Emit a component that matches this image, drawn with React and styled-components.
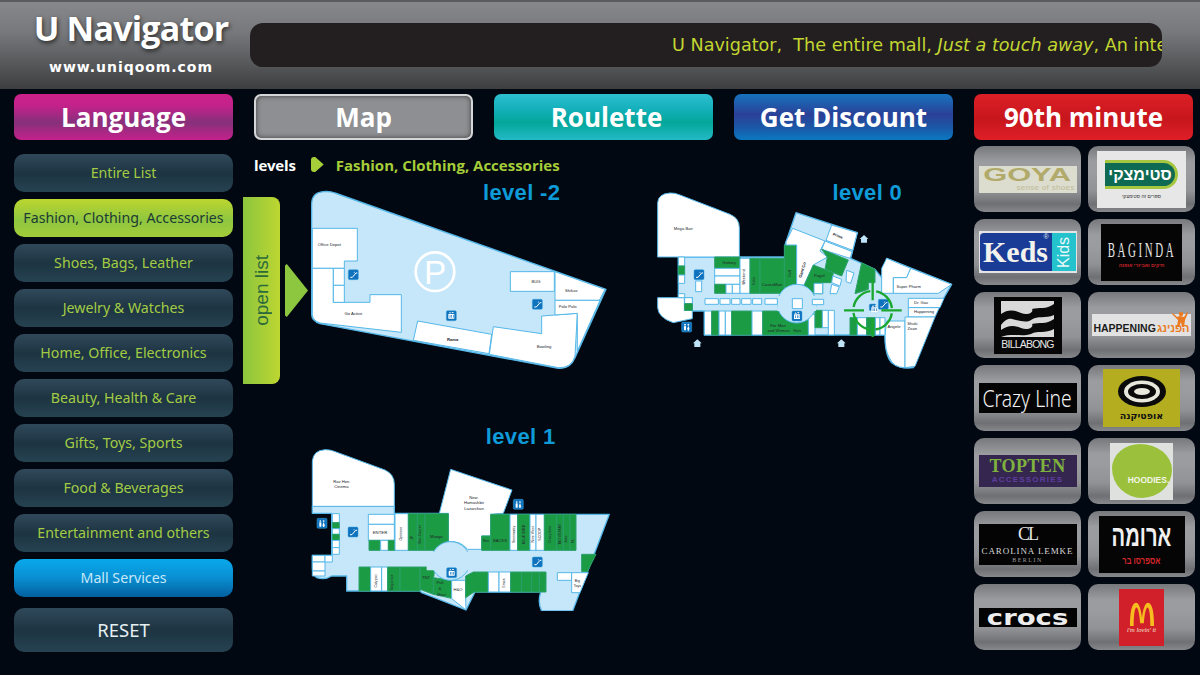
import React from 'react';
import styled, { createGlobalStyle } from 'styled-components';

const GlobalStyle = createGlobalStyle`
  html, body {
    margin: 0;
    padding: 0;
    background: #010812;
    overflow: hidden;
  }
  * { box-sizing: border-box; }
`;

const Page = styled.div`
  width: 1200px;
  height: 675px;
  overflow: hidden;
  background: #010812;
  font-family: 'Open Sans', 'Liberation Sans', sans-serif;
`;

const Header = styled.header`
  display: flex;
  align-items: center;
  height: 89px;
  padding-right: 38px;
  border-top: 2px solid #5a5b5e;
  background: linear-gradient(180deg, #87888b 0%, #77787b 35%, #3d3e40 100%);
`;

const Brand = styled.div`
  align-self: flex-start;
  width: 250px;
  flex: none;
  padding: 3px 0 0 12px;
  text-align: center;
`;

const BrandName = styled.div`
  color: #fff;
  font-size: 34px;
  line-height: 46px;
  font-weight: 700;
  letter-spacing: -0.8px;
  text-shadow: 1px 2px 4px rgba(0, 0, 0, 0.65);
`;

const BrandUrl = styled.div`
  margin-top: 7px;
  color: #fff;
  font-family: 'DejaVu Sans', sans-serif;
  font-size: 14px;
  line-height: 18px;
  font-weight: 700;
  letter-spacing: 0.95px;
`;

const Ticker = styled.div`
  flex: 1;
  height: 44px;
  margin-top: -2px;
  padding-left: 422px;
  border-radius: 13px;
  background: #231f20;
  overflow: hidden;
  white-space: pre;
  color: #c3d731;
  font-family: 'DejaVu Sans', sans-serif;
  font-size: 17.6px;
  line-height: 44px;
  em { font-style: italic; }
`;

const TopNav = styled.nav`
  display: grid;
  grid-template-columns: repeat(5, 219px);
  column-gap: 21px;
  margin: 5px 0 0 14px;
`;

const palettes = {
  magenta: 'linear-gradient(180deg, #cb2089 0%, #c4228b 25%, #86307a 62%, #c4218b 100%)',
  teal: 'linear-gradient(180deg, #2dbfd0 0%, #16b1bd 30%, #03a69a 62%, #23bac6 100%)',
  blue: 'linear-gradient(180deg, #1673be 0%, #2b4097 45%, #1c55a4 70%, #0b78c2 100%)',
  red: 'linear-gradient(180deg, #dc1f26 0%, #c7161d 55%, #e01f27 100%)',
  gray: '#8e8f92',
};

const TopButton = styled.button`
  height: 46px;
  padding: 0 0 0 ${(p) => (p.$tone === 'teal' ? 6 : 0)}px;
  border: ${(p) => (p.$tone === 'gray' ? '2px solid #d5d6d8' : 'none')};
  border-radius: 7px;
  background: ${(p) => palettes[p.$tone]};
  box-shadow: ${(p) => (p.$tone === 'gray' ? 'inset 0 0 5px #3c3c3e' : 'none')};
  color: #fff;
  font-family: 'Open Sans', sans-serif;
  font-size: 26px;
  line-height: 42px;
  font-weight: 700;
`;

const Columns = styled.main`
  display: grid;
  grid-template-columns: 219px 741px 221px;
  margin: 6px 0 0 14px;
`;

const Sidebar = styled.aside`
  display: flex;
  flex-direction: column;
  gap: 7px;
  padding-top: 8px;
`;

const sideTones = {
  normal: 'linear-gradient(180deg, #30495a 0%, #1d3442 50%, #264251 100%)',
  active: 'linear-gradient(180deg, #bdd62f 0%, #8fc640 55%, #a3cd39 100%)',
  service: 'linear-gradient(180deg, #08a9ec 0%, #0a8ed2 50%, #03609f 100%)',
};

const sideText = { normal: '#a3cc45', active: '#1d3b33', service: '#c5e8f9' };

const SideButton = styled.button`
  height: 38px;
  padding: 0 0 1px;
  border: none;
  border-radius: 10px;
  background: ${(p) => sideTones[p.$tone]};
  color: ${(p) => sideText[p.$tone]};
  font-family: 'Noto Sans', sans-serif;
  font-size: 14.2px;
  line-height: 37px;
  white-space: nowrap;
`;

const ResetButton = styled(SideButton)`
  height: 44px;
  margin-top: 4px;
  color: #e6eff2;
  font-size: 18.5px;
`;

const Center = styled.section`
  padding: 9px 0 0 10px;
`;

const Crumbs = styled.div`
  display: flex;
  align-items: center;
  height: 19px;
  padding-left: 11px;
  font-size: 15px;
  font-weight: 700;
`;

const CrumbLevel = styled.span`
  color: #fff;
  letter-spacing: -0.2px;
`;

const CrumbArrow = styled.span`
  width: 13px;
  height: 15px;
  margin: 0 12px 0 15px;
  border-radius: 3px;
  background: #a6ce39;
  clip-path: polygon(0 0, 35% 0, 100% 50%, 35% 100%, 0 100%);
`;

const CrumbTitle = styled.span`
  color: #a6ce39;
`;

const MapArea = styled.div`
  display: flex;
  align-items: flex-start;
  margin-top: 7px;
`;

const OpenList = styled.div`
  display: flex;
  align-items: center;
  justify-content: center;
  width: 37px;
  height: 187px;
  margin-top: 16px;
  border-radius: 0 8px 8px 0;
  background: linear-gradient(90deg, #8cc63f 0%, #bdd630 100%);
`;

const OpenListLabel = styled.span`
  writing-mode: vertical-rl;
  transform: rotate(180deg);
  color: #2c6a3c;
  font-family: 'Liberation Sans', sans-serif;
  font-size: 19px;
  line-height: 24px;
`;

const OpenArrow = styled.div`
  width: 23px;
  height: 53px;
  margin: 83px 0 0 5px;
  background: #8dc63f;
  clip-path: polygon(0 3%, 8% 0, 100% 50%, 8% 100%, 0 97%);
`;

const MapGrid = styled.div`
  display: grid;
  grid-template-columns: 332px 320px;
  grid-template-rows: 220px 190px;
  row-gap: 20px;
`;

const MapSvg = styled.svg`
  display: block;
  font-family: 'Liberation Sans', sans-serif;
`;

const LevelTitle = styled.text`
  fill: #0e9bd8;
  font-size: 66px;
  font-weight: 700;
  letter-spacing: 1px;
  text-anchor: middle;
`;

const Shop = styled.path`
  fill: ${(p) => (p.$kind === 'g' ? '#1c9b45' : p.$kind === 'b' ? '#c6e7f9' : '#fff')};
  stroke: ${(p) => (p.$kind === 'g' ? '#2a9f6a' : '#55b7e8')};
  stroke-width: ${(p) => (p.$kind === 'b' ? 4 : 3)};
  stroke-linejoin: round;
`;

const ShopLabel = styled.text`
  fill: #20242a;
  font-size: ${(p) => p.$size || 12.5}px;
  font-weight: ${(p) => (p.$bold ? 700 : 400)};
  text-anchor: middle;
`;

const r = (x0, y0, x1, y1) => `M${x0} ${y0}H${x1}V${y1}H${x0}Z`;

const MapIcon = ({ x, y, kind, size = 30 }) => {
  if (kind === 'home') {
    return <path d={`M${x} ${y - 12}L${x + 13} ${y}H${x + 9}V${y + 11}H${x - 9}V${y}H${x - 13}Z`} fill="#bfe4f7" />;
  }
  const h = size / 2;
  return (
    <g transform={`translate(${x - h} ${y - h})`}>
      <rect width={size} height={size} rx="4" fill="#0f72bd" stroke="#3aa0dd" strokeWidth="1.5" />
      {kind === 'esc' && (
        <g fill="none" stroke="#fff" strokeWidth="3">
          <path d="M6 23L12 23L23 10L27 10" />
          <circle cx="18" cy="8" r="1.5" fill="#fff" stroke="none" />
        </g>
      )}
      {kind === 'lift' && (
        <g fill="#fff">
          <rect x="6" y="10" width="18" height="14" rx="1" />
          <path d="M11 4L15 8H7ZM19 8L23 4H15Z" />
          <rect x="10" y="13" width="2" height="8" fill="#0f72bd" />
          <rect x="15" y="13" width="2" height="8" fill="#0f72bd" />
          <rect x="20" y="13" width="2" height="8" fill="#0f72bd" />
        </g>
      )}
      {kind === 'wc' && (
        <g fill="#fff">
          <circle cx="10" cy="8" r="2.6" />
          <circle cx="20" cy="8" r="2.6" />
          <rect x="7" y="12" width="6" height="13" rx="1.5" />
          <path d="M20 11L24 22H16Z" />
          <rect x="18" y="21" width="4" height="5" />
        </g>
      )}
    </g>
  );
};

const LevelMap = ({ title, titleX, titleY, width, height, viewBox, base, shops, after, labels, icons, children }) => (
  <MapSvg width={width} height={height} viewBox={viewBox}>
    <LevelTitle x={titleX} y={titleY}>{title}</LevelTitle>
    <Shop $kind="b" d={base} />
    {shops.map(([d, kind], i) => <Shop key={i} d={d} $kind={kind} />)}
    {after}
    {labels.map(([x, y, text, rot, opts], i) => (
      <ShopLabel
        key={i}
        x={x}
        y={y}
        $size={opts && opts.size}
        $bold={opts && opts.bold}
        transform={rot ? `rotate(${rot} ${x} ${y})` : undefined}
      >
        {text}
      </ShopLabel>
    ))}
    {icons.map(([x, y, kind, size], i) => <MapIcon key={i} x={x} y={y} kind={kind} size={size} />)}
    {children}
  </MapSvg>
);

const minusTwoShops = [
  ['M217 142H352V240H313V262H217Z'],
  ['M217 262H280V364H390V341H484V454L240 426Q217 418 217 400Z'],
  [r(280, 262, 313, 313)],
  [r(280, 313, 313, 364)],
  ['M533 420L755 460L747 518L520 478Z'],
  ['M760 437L905 458V405L1012 397L1005 525Q995 562 955 560L748 520Z'],
  [r(811, 272, 943, 331)],
  ['M945 272L1095 325L1078 358H945Z'],
  ['M945 358H1080L1012 510V397L945 402Z'],
];

const minusTwoLabels = [
  [268, 196, 'Office Depot'],
  [340, 401, 'Go Active'],
  [638, 479, 'Rama', 0, { bold: true }],
  [888, 305, 'BUG'],
  [994, 333, 'Shikav'],
  [983, 380, 'Polo Polo'],
  [912, 502, 'Bowling'],
];

const zeroShops = [
  ['M53 65Q55 38 90 36Q105 35 120 42L270 100Q298 112 298 140V228H53Z'],
  ['M53 350H133V388H157V413L100 425Q55 410 53 380Z'],
  [r(115, 228, 134, 255)],
  [r(115, 255, 134, 282), 'g'],
  [r(115, 282, 134, 307)],
  [r(115, 338, 134, 350)],
  [r(134, 350, 157, 368)],
  [r(134, 368, 157, 388), 'g'],
  [r(224, 228, 300, 262), 'g'],
  [r(224, 262, 300, 285)],
  [r(224, 285, 300, 310)],
  [r(224, 310, 258, 337), 'g'],
  [r(258, 310, 277, 337)],
  [r(277, 310, 300, 337)],
  [r(300, 232, 330, 337)],
  [r(330, 232, 360, 337), 'g'],
  [r(360, 232, 433, 337), 'g'],
  ['M433 192H470V318L433 330Z', 'g'],
  ['M438 182L458 142L555 180L540 210L562 228L520 252L492 312H470V192H438Z'],
  ['M575 132L652 155L638 208L558 178Z'],
  ['M555 180L637 212L630 232L545 205Z'],
  ['M545 205L625 237L605 285L555 265L562 228Z', 'g'],
  ['M520 252L580 275L575 305H548V338H520L492 315Z', 'g'],
  [r(522, 307, 548, 338)],
  ['M578 285L605 295L600 315L575 305Z'],
  ['M575 310L598 318L590 338H570Z'],
  ['M620 268L642 276L632 307L618 302Z'],
  ['M665 245L705 265V305H685V325L645 338Z', 'g'],
  ['M725 262L740 232L812 262L800 290H760V337H725Z'],
  ['M812 262L935 310L895 337H760V290H800Z'],
  ['M805 352H912L900 380H805Z'],
  ['M805 380H898L885 408H805Z'],
  ['M740 420H795V560Q760 560 748 530Q735 510 735 462Z'],
  ['M795 408H885L825 556L795 560Z'],
  [r(193, 390, 215, 462)],
  [r(215, 390, 237, 462), 'g'],
  [r(237, 390, 256, 462)],
  [r(256, 390, 275, 462)],
  [r(275, 390, 336, 462), 'g'],
  [r(336, 390, 368, 462)],
  [r(368, 390, 505, 462), 'g'],
  [r(505, 400, 525, 462)],
  [r(525, 388, 547, 440), 'g'],
  [r(547, 388, 565, 440)],
  [r(565, 388, 583, 462)],
  [r(630, 410, 652, 462), 'g'],
  [r(652, 410, 680, 462)],
  [r(680, 410, 706, 462), 'g'],
  [r(706, 410, 720, 462)],
  [r(720, 410, 735, 462)],
];

const zeroBoxes = [
  [r(167, 300, 185, 332)],
  [r(195, 353, 235, 370)],
  [r(240, 353, 270, 370)],
  [r(275, 353, 300, 370)],
  [r(305, 353, 333, 370)],
  [r(338, 353, 365, 370)],
  [r(375, 353, 412, 370)],
  [r(457, 353, 487, 383)],
  [r(517, 355, 551, 371)],
];

const zeroLabels = [
  [130, 146, 'Mega Bair'],
  [267, 249, 'Gottary'],
  [315, 288, 'Weekend', -90, { size: 11 }],
  [345, 300, 'Celio', -90, { size: 11 }],
  [396, 314, 'CastroMan'],
  [452, 278, 'Golf', -90, { size: 11 }],
  [491, 268, 'Gant Co', -72, { bold: true }],
  [538, 288, 'Pagel'],
  [592, 168, 'Prime', 20, { bold: true, size: 11 }],
  [806, 322, 'Super Pharm'],
  [843, 369, 'Dr. Gav'],
  [852, 397, 'Happening'],
  [414, 438, 'For Man'],
  [416, 454, 'and Woman'],
  [472, 454, 'Hack', 0, { size: 10 }],
  [762, 440, 'Angele'],
  [817, 432, 'Shuki'],
  [817, 448, 'Zoan'],
];

const zeroIcons = [
  [177, 281, 'esc'],
  [471, 405, 'lift'],
  [730, 370, 'esc'],
  [698, 379, 'lift', 20],
  [140, 438, 'wc'],
  [172, 487, 'home'],
  [604, 487, 'home'],
  [672, 174, 'home'],
];

const oneShops = [
  ['M37 120Q40 88 75 86Q90 86 100 90L255 147Q283 160 283 190V256H37Z'],
  ['M452 145L636 207L610 277L572 280V345H545V385H503Q480 358 445 362V277H418Z'],
  [r(97, 278, 118, 305)],
  [r(97, 305, 118, 323), 'g'],
  [r(97, 323, 118, 340)],
  [r(97, 340, 118, 358), 'g'],
  [r(97, 358, 118, 380)],
  [r(97, 380, 118, 400)],
  [r(37, 403, 75, 423)],
  [r(75, 403, 97, 423)],
  [r(37, 423, 75, 450)],
  [r(37, 450, 75, 465)],
  [r(205, 280, 283, 310)],
  [r(205, 310, 283, 358)],
  [r(207, 358, 240, 388), 'g'],
  [r(242, 358, 265, 388)],
  [r(265, 358, 285, 388), 'g'],
  [r(285, 278, 325, 388)],
  ['M325 278H352V388H325Z', 'g'],
  ['M352 278H375V388H352Z', 'g'],
  ['M375 278H445V360Q420 365 403 388H375Z', 'g'],
  [r(545, 345, 572, 388), 'g'],
  [r(572, 280, 630, 388), 'g'],
  [r(630, 280, 653, 388)],
  [r(653, 280, 690, 388), 'g'],
  [r(690, 280, 708, 388)],
  [r(708, 280, 733, 388)],
  [r(733, 280, 770, 388), 'g'],
  [r(770, 280, 790, 388), 'g'],
  [r(790, 280, 810, 388), 'g'],
  [r(810, 280, 828, 388), 'g'],
  ['M845 400H888L862 452H845Z', 'g'],
  [r(177, 438, 212, 510), 'g'],
  [r(212, 438, 245, 510)],
  [r(245, 438, 263, 510)],
  [r(263, 438, 300, 510), 'g'],
  [r(300, 438, 360, 510), 'g'],
  ['M360 438H400Q405 460 400 470V520L360 505Z', 'g'],
  ['M400 470L455 478V532L400 520Z', 'g'],
  ['M455 478H497V530L498 567L455 533Z'],
  ['M497 465L520 453H565V513H522L497 530Z', 'g'],
  [r(565, 453, 597, 513)],
  [r(597, 453, 632, 513)],
  [r(632, 453, 665, 513), 'g'],
  [r(665, 453, 695, 513), 'g'],
  [r(695, 453, 718, 513), 'g'],
  [r(718, 453, 738, 513), 'g'],
  [r(772, 455, 815, 478)],
  ['M815 455H865L840 515H815Z'],
];

const oneLabels = [
  [124, 186, 'Rav Hen'],
  [124, 202, 'Cinema'],
  [520, 233, 'New'],
  [522, 250, 'Hamashbir'],
  [522, 266, 'Lazarchan'],
  [240, 340, 'ENTER', 0, { size: 13 }],
  [307, 338, 'Optitone', -90, { size: 11 }],
  [340, 350, 'JP', -90, { size: 11 }],
  [362, 340, 'Dor-Carpet', -90, { size: 11 }],
  [409, 351, 'Mango'],
  [558, 364, 'Ren', 0, { size: 10 }],
  [600, 364, 'BACKS'],
  [644, 340, 'Steinmatzy', -90, { size: 10.5 }],
  [675, 340, 'BLUE BIRD', -90, { size: 11 }],
  [702, 340, 'Nine West', -90, { size: 10.5 }],
  [724, 340, 'SCOOP', -90, { size: 10.5 }],
  [754, 340, 'Crazy Line', -90, { size: 11 }],
  [783, 340, 'TAO WOMAN', -90, { size: 10 }],
  [802, 355, 'Juno', -90, { size: 10 }],
  [823, 360, 'ML', -90, { size: 10 }],
  [232, 480, 'Calypso', -90, { size: 11 }],
  [280, 485, 'Tongue Ivie', -90, { size: 9.5 }],
  [378, 473, 'TNT'],
  [420, 490, 'Pull'],
  [420, 507, '&'],
  [425, 524, 'Bear'],
  [474, 511, 'H&O'],
  [616, 486, 'Emza', -90, { size: 10.5 }],
  [832, 482, 'Big', 0, { size: 10.5 }],
  [832, 497, 'Toys', 0, { size: 10.5 }],
];

const oneIcons = [
  [66, 307, 'wc'],
  [159, 333, 'esc'],
  [655, 250, 'wc'],
  [712, 423, 'esc'],
  [455, 455, 'lift'],
];

const Target = () => (
  <g fill="none" stroke="#1ba72f" strokeWidth="7">
    <circle cx="698" cy="388" r="58" strokeDasharray="73 18.1" strokeDashoffset="-9" />
    <path d="M612 388H672M724 388H785M698 298V358M698 415V468" />
  </g>
);

const LogoGrid = styled.div`
  display: grid;
  grid-template-columns: repeat(2, 107px);
  grid-auto-rows: 66px;
  gap: 7px;
`;

const Tile = styled.div`
  display: flex;
  align-items: center;
  justify-content: center;
  border-radius: 10px;
  background: linear-gradient(180deg, #77787b 0%, #9b9c9f 24%, #9b9c9f 40%, #919295 68%, #6f7073 88%, #87888b 100%);
`;

const Logo = styled.div`
  position: relative;
  display: flex;
  flex-direction: column;
  align-items: center;
  justify-content: center;
  width: ${(p) => p.$w}px;
  height: ${(p) => p.$h}px;
  background: ${(p) => p.$bg};
  white-space: nowrap;
  font-family: 'Liberation Sans', sans-serif;
`;

const GoyaWord = styled.div`
  color: #b1aa6a;
  font-family: 'Liberation Sans', sans-serif;
  font-size: 19px;
  line-height: 17px;
  font-weight: 700;
  transform: scaleX(1.62);
`;

const GoyaTag = styled.div`
  align-self: flex-end;
  margin-right: 2px;
  color: #c0bb96;
  font-size: 8px;
  line-height: 9px;
  letter-spacing: 0.3px;
`;

const SteimPill = styled.div`
  width: 73px;
  height: 29px;
  border: 3px solid #a6c63f;
  border-left-width: 0;
  border-radius: 0 15px 15px 0;
  background: #0e6a52;
  color: #fff;
  font-size: 16px;
  line-height: 23px;
  font-weight: 700;
  text-align: center;
`;

const SteimTag = styled.div`
  margin-top: 4px;
  color: #333;
  font-size: 5px;
  line-height: 6px;
`;

const KedsLogo = styled(Logo)`
  flex-direction: row;
  align-items: stretch;
  padding: 2px 1px;
  background: #e4e4e4;
`;

const KedsWord = styled.div`
  flex: 1;
  border-radius: 4px 0 0 4px;
  background: #1b3c96;
  color: #f3f3ee;
  font-family: 'Liberation Serif', serif;
  font-size: 30px;
  line-height: 38px;
  font-weight: 700;
  text-align: center;
`;

const KedsMark = styled.span`
  position: absolute;
  top: 2px;
  left: 65px;
  color: #dfe6f3;
  font-size: 7px;
  line-height: 8px;
`;

const KidsWord = styled.div`
  display: flex;
  align-items: center;
  justify-content: center;
  width: 24px;
  background: #23c2cc;
  color: #e8f8f8;
  font-size: 16px;
  writing-mode: vertical-rl;
  transform: rotate(180deg);
`;

const BagindaWord = styled.div`
  margin-top: 2px;
  color: #e5e5e5;
  font-family: 'Liberation Serif', serif;
  font-size: 21px;
  line-height: 24px;
  letter-spacing: 5px;
  transform: scaleX(0.52);
`;

const RedTag = styled.div`
  color: #d1262b;
  font-size: ${(p) => p.$size}px;
  line-height: ${(p) => p.$size + 2}px;
  font-weight: 700;
`;

const BillaWord = styled.div`
  margin-top: 1px;
  color: #e6e6e6;
  font-size: 10.5px;
  line-height: 12px;
  letter-spacing: -0.8px;
`;

const HappeningLogo = styled(Logo)`
  justify-content: flex-end;
  padding-bottom: 1px;
`;

const HappeningWord = styled.div`
  display: flex;
  align-items: center;
  color: #1b1b1b;
  font-family: 'Liberation Sans', sans-serif;
  font-size: 10.5px;
  line-height: 13px;
  font-weight: 700;
`;

const HappeningHebrew = styled.span`
  margin-left: 1px;
  color: #ea7b22;
  font-size: 11px;
`;

const HappeningFigure = styled.svg`
  position: absolute;
  top: -3px;
  right: 2px;
`;

const CrazyWord = styled.div`
  color: #f2f2f2;
  font-family: 'Noto Sans', sans-serif;
  font-size: 23px;
  line-height: 30px;
  font-weight: 300;
  transform: scaleX(0.84);
`;

const OptikaWord = styled.div`
  margin-top: 3px;
  color: #111;
  font-family: 'DejaVu Sans', sans-serif;
  font-size: 9.5px;
  line-height: 11px;
  font-weight: 700;
`;

const ToptenWord = styled.div`
  color: #7fb13f;
  font-family: 'Liberation Serif', serif;
  font-size: 18px;
  line-height: 16px;
  font-weight: 700;
  letter-spacing: 0.4px;
`;

const ToptenTag = styled.div`
  margin-top: 1px;
  color: #5e3fa0;
  font-size: 8px;
  line-height: 9px;
  font-weight: 700;
  letter-spacing: 1.2px;
`;

const HoodieBlob = styled.div`
  display: flex;
  align-items: flex-end;
  justify-content: center;
  width: 60px;
  height: 54px;
  padding: 0 0 13px 14px;
  border-radius: 47% 53% 50% 50% / 45% 48% 52% 55%;
  background: #9bc13c;
  color: #f2f5e6;
  font-size: 8.5px;
  font-weight: 700;
`;

const CarolinaMark = styled.div`
  color: #e4e4e4;
  font-family: 'Liberation Serif', serif;
  font-size: 18px;
  line-height: 19px;
  letter-spacing: -2px;
`;

const CarolinaWord = styled.div`
  margin-top: 2px;
  color: #d8d8d8;
  font-family: 'Liberation Serif', serif;
  font-size: 9px;
  line-height: 10px;
  letter-spacing: 0.9px;
`;

const CarolinaCity = styled(CarolinaWord)`
  margin-top: 1px;
  color: #9d9d9d;
  font-size: 6px;
  line-height: 7px;
  letter-spacing: 1.5px;
`;

const AromaWord = styled.div`
  color: #f0f0f0;
  font-family: 'Liberation Sans', sans-serif;
  font-size: 28px;
  line-height: 32px;
  font-weight: 700;
  transform: scale(0.72, 1.05);
`;

const AromaTag = styled(RedTag)`
  margin-top: 2px;
  transform: scaleX(0.75);
`;

const CrocsWord = styled.div`
  color: #ededed;
  font-family: 'DejaVu Sans', sans-serif;
  font-size: 22px;
  line-height: 19px;
  font-weight: 700;
  transform: scaleX(1.25);
`;

const McTag = styled.div`
  color: #f5e6d8;
  font-family: 'Liberation Serif', serif;
  font-size: 6.5px;
  line-height: 8px;
  font-style: italic;
`;

const logos = [
  <Logo key="goya" $w={98} $h={27} $bg="#dcdccf">
    <GoyaWord>GOYA</GoyaWord>
    <GoyaTag>sense of shoes</GoyaTag>
  </Logo>,
  <Logo key="steimatzky" $w={89} $h={57} $bg="#e6e7e6">
    <SteimPill>סטימצקי</SteimPill>
    <SteimTag>ספרים זה סטימצקי</SteimTag>
  </Logo>,
  <KedsLogo key="keds" $w={98} $h={42}>
    <KedsWord>Keds</KedsWord>
    <KedsMark>®</KedsMark>
    <KidsWord>Kids</KidsWord>
  </KedsLogo>,
  <Logo key="baginda" $w={81} $h={57} $bg="#050505">
    <BagindaWord>BAGINDA</BagindaWord>
    <RedTag $size={5}>תיקים ואביזרי אופנה</RedTag>
  </Logo>,
  <Logo key="billabong" $w={68} $h={57} $bg="#060606">
    <svg width="53" height="36" viewBox="0 0 53 36">
      <rect width="53" height="36" fill="#d9d9d9" />
      <path d="M0 13C7 8 13 9 20 12C27 15 33 11 31 8C38 6 45 9 53 3V14C44 18 37 14 30 19C26 22 18 20 11 18C7 17 3 20 0 24Z" fill="#0a0a0a" />
      <path d="M0 29C7 24 13 24 20 27C27 30 33 26 31 23C38 21 45 24 53 18V28C44 33 37 29 30 33C22 36 10 32 0 36Z" fill="#0a0a0a" />
    </svg>
    <BillaWord>BILLABONG</BillaWord>
  </Logo>,
  <HappeningLogo key="happening" $w={99} $h={22} $bg="#e2e2e2">
    <HappeningFigure width="17" height="17" viewBox="0 0 17 17">
      <path d="M1 2L5 6L8 5L12 6L15 1L16 2L13 9L12 16H10L9 11L7 16H5L6 9L0 3Z" fill="#ea7b22" />
      <circle cx="9" cy="3" r="2.2" fill="#ea7b22" />
    </HappeningFigure>
    <HappeningWord>HAPPENING<HappeningHebrew>הפנינג</HappeningHebrew></HappeningWord>
  </HappeningLogo>,
  <Logo key="crazy" $w={98} $h={30} $bg="#040404">
    <CrazyWord>Crazy Line</CrazyWord>
  </Logo>,
  <Logo key="optikana" $w={77} $h={58} $bg="#b4ad1f">
    <svg width="48" height="31" viewBox="0 0 48 31">
      <ellipse cx="24" cy="15.5" rx="24" ry="15.5" fill="#0a0a0a" />
      <ellipse cx="24" cy="15.5" rx="18" ry="11" fill="#e8e8dc" />
      <ellipse cx="24" cy="15.5" rx="14" ry="7.5" fill="#0a0a0a" />
      <ellipse cx="24" cy="15.5" rx="8" ry="3.5" fill="#e8e8dc" />
    </svg>
    <OptikaWord>אופטיקנה</OptikaWord>
  </Logo>,
  <Logo key="topten" $w={98} $h={32} $bg="#35264f">
    <ToptenWord>TOPTEN</ToptenWord>
    <ToptenTag>ACCESSORIES</ToptenTag>
  </Logo>,
  <Logo key="hoodies" $w={63} $h={57} $bg="#dfe1df">
    <HoodieBlob>HOODIES.</HoodieBlob>
  </Logo>,
  <Logo key="carolina" $w={98} $h={41} $bg="#040404">
    <CarolinaMark>CL</CarolinaMark>
    <CarolinaWord>CAROLINA LEMKE</CarolinaWord>
    <CarolinaCity>BERLIN</CarolinaCity>
  </Logo>,
  <Logo key="aroma" $w={86} $h={57} $bg="#050505">
    <AromaWord>ארומה</AromaWord>
    <AromaTag $size={10}>אספרסו בר</AromaTag>
  </Logo>,
  <Logo key="crocs" $w={98} $h={19} $bg="#030303">
    <CrocsWord>crocs</CrocsWord>
  </Logo>,
  <Logo key="mcd" $w={45} $h={57} $bg="#d2202a">
    <svg width="28" height="25" viewBox="0 0 30 27">
      <path d="M2 27C2 12 4 2 8.5 2C12 2 14 10 15 18C16 10 18 2 21.5 2C26 2 28 12 28 27H24C24 16 23 7 21 7C19 7 17.5 16 17 24H13C12.5 16 11 7 9 7C7 7 6 16 6 27Z" fill="#f7bd1e" />
    </svg>
    <McTag>i'm lovin' it</McTag>
  </Logo>,
];

const categories = [
  'Entire List',
  'Fashion, Clothing, Accessories',
  'Shoes, Bags, Leather',
  'Jewelry & Watches',
  'Home, Office, Electronics',
  'Beauty, Health & Care',
  'Gifts, Toys, Sports',
  'Food & Beverages',
  'Entertainment and others',
  'Mall Services',
];

const toneFor = (name) => {
  if (name === 'Mall Services') return 'service';
  if (name === 'Fashion, Clothing, Accessories') return 'active';
  return 'normal';
};

export default function App() {
  return (
    <Page>
      <GlobalStyle />
      <Header>
        <Brand>
          <BrandName>U Navigator</BrandName>
          <BrandUrl>www.uniqoom.com</BrandUrl>
        </Brand>
        <Ticker>U Navigator,  The entire mall, <em>Just a touch away</em>, An interactive</Ticker>
      </Header>
      <TopNav>
        <TopButton $tone="magenta">Language</TopButton>
        <TopButton $tone="gray">Map</TopButton>
        <TopButton $tone="teal">Roulette</TopButton>
        <TopButton $tone="blue">Get Discount</TopButton>
        <TopButton $tone="red">90th minute</TopButton>
      </TopNav>
      <Columns>
        <Sidebar>
          {categories.map((name) => (
            <SideButton key={name} $tone={toneFor(name)}>{name}</SideButton>
          ))}
          <ResetButton $tone="normal">RESET</ResetButton>
        </Sidebar>
        <Center>
          <Crumbs>
            <CrumbLevel>levels</CrumbLevel>
            <CrumbArrow />
            <CrumbTitle>Fashion, Clothing, Accessories</CrumbTitle>
          </Crumbs>
          <MapArea>
            <OpenList><OpenListLabel>open list</OpenListLabel></OpenList>
            <OpenArrow />
            <MapGrid>
              <LevelMap
                title="level -2"
                titleX={845}
                titleY={57}
                width={332}
                height={220}
                viewBox="204 0 996 660"
                base="M215 70Q215 35 250 32Q270 30 285 36L1098 325L1005 530Q990 565 955 562L240 428Q215 420 215 400Z"
                shops={minusTwoShops}
                labels={minusTwoLabels}
                icons={[[340, 281, 'esc'], [634, 404, 'lift'], [892, 370, 'esc']]}
              >
                <circle cx="585" cy="272" r="58" fill="none" stroke="#fff" strokeWidth="8" />
                <text x="585" y="308" fill="#fff" fontSize="100" textAnchor="middle">P</text>
              </LevelMap>
              <LevelMap
                title="level 0"
                titleX={682}
                titleY={57}
                width={320}
                height={220}
                viewBox="0 0 960 660"
                base="M115 228H435V192L468 95L652 155L632 232L705 265L725 290L740 232L935 310L880 405L820 560Q780 565 755 545Q735 525 735 462H193V390H157V350H115Z"
                shops={zeroShops}
                after={
                  <>
                    <circle cx="470" cy="368" r="58" fill="#c6e7f9" stroke="#55b7e8" strokeWidth="3" />
                    <path d="M412 345V390H528V345Z" fill="#c6e7f9" />
                    {zeroBoxes.map(([d], i) => <Shop key={i} d={d} />)}
                  </>
                }
                labels={zeroLabels}
                icons={zeroIcons}
              >
                <Target />
              </LevelMap>
              <LevelMap
                title="level 1"
                titleX={662}
                titleY={69}
                width={332}
                height={190}
                viewBox="24 0 996 570"
                base="M37 256H283V277H572V280H928L818 570H725Q712 545 722 513H525L498 567L365 515L360 510H140V465H95Q75 478 50 470Q37 460 37 440V403H95V277H37Z"
                shops={oneShops}
                after={
                  <>
                    <path d="M394 420A58 58 0 0 1 510 420A58 58 0 0 1 394 420Z" fill="#c6e7f9" stroke="#55b7e8" strokeWidth="3" />
                    <path d="M380 392H530V448H380Z" fill="#c6e7f9" />
                  </>
                }
                labels={oneLabels}
                icons={oneIcons}
              />
            </MapGrid>
          </MapArea>
        </Center>
        <LogoGrid>
          {logos.map((logo, i) => <Tile key={i}>{logo}</Tile>)}
        </LogoGrid>
      </Columns>
    </Page>
  );
}
